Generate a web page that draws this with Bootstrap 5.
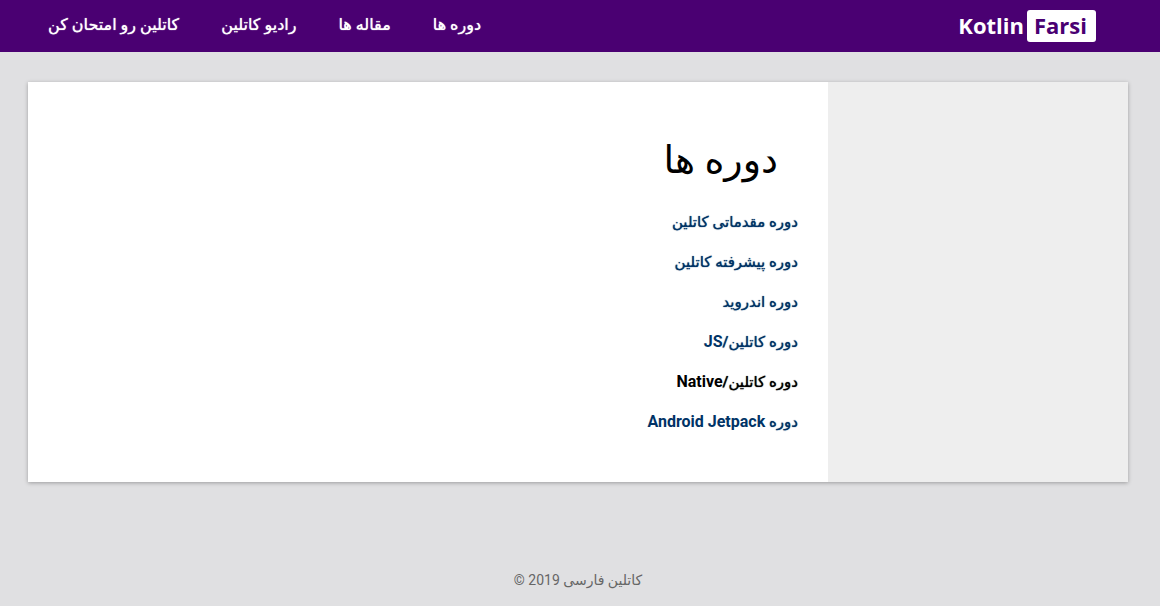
<!DOCTYPE html>
<html lang="fa" dir="rtl">
<head>
<meta charset="utf-8">
<meta name="viewport" content="width=device-width, initial-scale=1">
<title>کاتلین فارسی</title>
<link href="https://cdn.jsdelivr.net/npm/bootstrap@5.3.0/dist/css/bootstrap.min.css" rel="stylesheet">
<style>
  body { font-family: Roboto, "DejaVu Sans", sans-serif; background: #e0e0e2; color: #000; }
  .site-bar { background: #4a0072; min-height: 52px; padding: 0 64px 0 48px; }
  .brand { font: 700 22px/30px "Open Sans", sans-serif; gap: 3px; }
  .brand-tag { background: #fff; color: #4a0072; border-radius: 3px; padding: 0 9px 2px 7px; }
  .brand-name { padding-bottom: 2px; }
  .site-links { gap: 42px; font-size: 16px; line-height: 20px; font-weight: 500; padding-bottom: 2px; text-shadow: 0 0 1px currentColor; }
  .page-wrap { padding: 30px 32px 0 28px; }
  .panel { background: #fff; min-height: 400px; box-shadow: 0 1px 4px rgba(0,0,0,.3); }
  .side { background: #eee; flex: 0 0 300px; }
  .content { padding: 48px 30px 40px; }
  .page-title { font-size: 38px; line-height: 60px; font-weight: 400; padding-right: 20px; margin-bottom: 12px; }
  .courses { font-size: 15px; line-height: 40px; font-weight: 500; text-shadow: 0 0 1px currentColor; }
  .courses a { color: #003366; }
  .courses a.current { color: #000; }
  .courses bdi { font-size: 16px; line-height: 20px; font-weight: 700; text-shadow: none; }
  .site-foot { font-size: 14px; line-height: 20px; color: #666; padding: 88px 4px 16px 0; }
</style>
</head>
<body>
<header class="site-bar d-flex align-items-center justify-content-between">
  <a href="#" class="brand d-flex align-items-center text-white text-decoration-none" dir="ltr"><span class="brand-name">Kotlin</span><span class="brand-tag">Farsi</span></a>
  <nav class="site-links d-flex">
    <a href="#" class="text-white text-decoration-none">دوره ها</a>
    <a href="#" class="text-white text-decoration-none">مقاله ها</a>
    <a href="#" class="text-white text-decoration-none">رادیو کاتلین</a>
    <a href="#" class="text-white text-decoration-none">کاتلین رو امتحان کن</a>
  </nav>
</header>
<div class="page-wrap">
  <div class="panel d-flex">
    <aside class="side"></aside>
    <main class="content flex-grow-1">
      <h1 class="page-title">دوره ها</h1>
      <ul class="courses list-unstyled p-0 m-0">
        <li><a href="#" class="text-decoration-none">دوره مقدماتی کاتلین</a></li>
        <li><a href="#" class="text-decoration-none">دوره پیشرفته کاتلین</a></li>
        <li><a href="#" class="text-decoration-none">دوره اندروید</a></li>
        <li><a href="#" class="text-decoration-none">دوره کاتلین/<bdi>JS</bdi></a></li>
        <li><a href="#" class="current text-decoration-none">دوره کاتلین/<bdi>Native</bdi></a></li>
        <li><a href="#" class="text-decoration-none">دوره <bdi>Android Jetpack</bdi></a></li>
      </ul>
    </main>
  </div>
</div>
<footer class="site-foot text-center">کاتلین فارسی 2019 ©</footer>
<script src="https://cdn.jsdelivr.net/npm/bootstrap@5.3.0/dist/js/bootstrap.bundle.min.js"></script>
</body>
</html>
